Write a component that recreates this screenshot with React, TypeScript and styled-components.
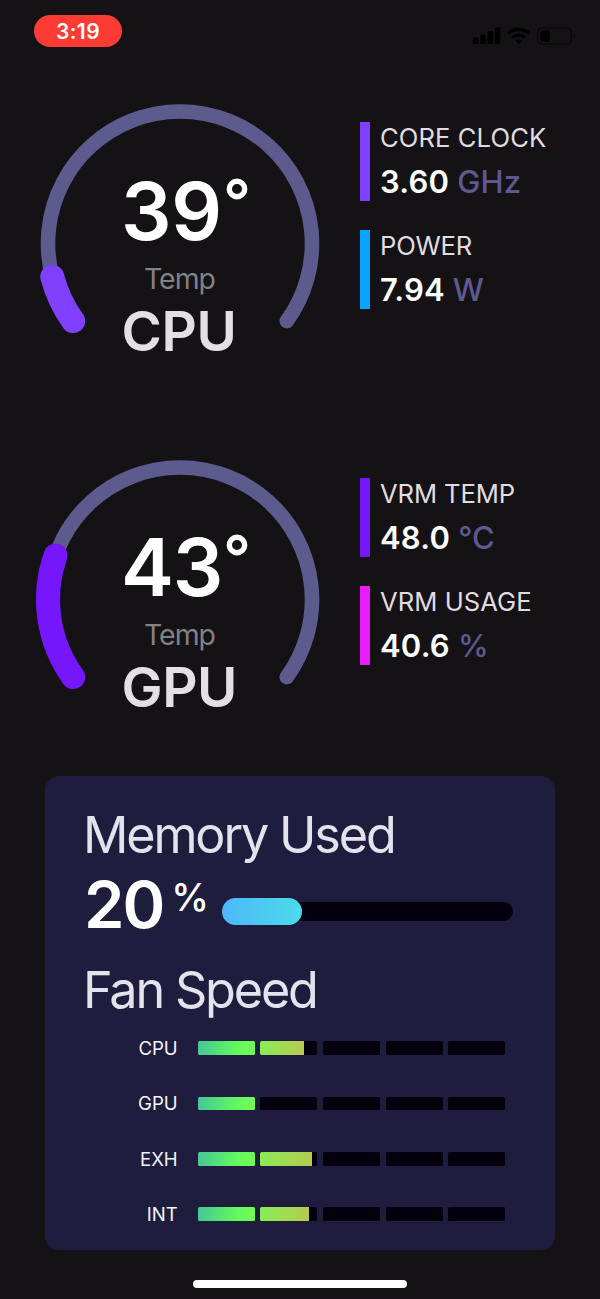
import React from "react";
import styled, { createGlobalStyle } from "styled-components";

const GlobalStyle = createGlobalStyle`
  * { box-sizing: border-box; }
  body {
    margin: 0;
    background: #141215;
    font-family: Inter, "Liberation Sans", sans-serif;
    color: #fff;
  }
`;

const Screen = styled.main`
  width: 600px;
  height: 1299px;
  overflow: hidden;
  display: flex;
  flex-direction: column;
  background: #141215;
`;

const StatusBar = styled.header`
  height: 104px;
  padding: 14.5px 25px 0 34px;
  display: flex;
  justify-content: space-between;
  align-items: flex-start;
`;

const RecordingPill = styled.div`
  width: 88px;
  height: 32px;
  border-radius: 16px;
  background: #fc3b35;
  font-size: 21px;
  font-weight: 600;
  line-height: 33px;
  letter-spacing: 0.4px;
  text-align: center;
`;

const StatusIcons = styled.svg`
  display: block;
  width: 104px;
  height: 24px;
  margin-top: 10.5px;
`;

const Section = styled.section`
  height: 356px;
  display: flex;
  align-items: flex-start;
`;

const GaugeBox = styled.div`
  width: 360px;
  display: grid;
  > * { grid-area: 1 / 1; }
`;

const Dial = styled.svg`
  display: block;
  width: 360px;
  height: 260px;
`;

const Readout = styled.div`
  padding: 67px 0 0 122px;
  display: flex;
  flex-direction: column;
  align-items: flex-start;
  white-space: nowrap;
`;

const Degrees = styled.div<{ $track: number }>`
  font-size: 79.5px;
  font-weight: 600;
  line-height: 80px;
  letter-spacing: ${(p) => p.$track}px;
  display: flex;
`;

const Digits = styled.span`
  width: 105px;
  margin-left: -1px;
`;

const DegreeMark = styled.svg`
  width: 22px;
  height: 22px;
  margin-top: 7px;
`;

const Caption = styled.div`
  margin: 12px 0 0 22px;
  font-size: 28.4px;
  line-height: 32px;
  letter-spacing: -1px;
  color: #828185;
`;

const Device = styled.div`
  margin: 6px 0 0 -0.5px;
  font-size: 54.8px;
  font-weight: 600;
  line-height: 60px;
  letter-spacing: -0.4px;
  color: #e3e0e5;
`;

const Metrics = styled.div`
  padding-top: 18px;
  display: flex;
  flex-direction: column;
  gap: 29px;
`;

const Metric = styled.div<{ $color: string }>`
  height: 79px;
  padding-left: 10px;
  border-left: 10px solid ${(p) => p.$color};
  white-space: nowrap;
`;

const MetricName = styled.div<{ $track: number }>`
  font-size: 25.6px;
  line-height: 32px;
  letter-spacing: ${(p) => p.$track}px;
  color: #e0dde2;
`;

const MetricValue = styled.div`
  margin-top: 10px;
  font-size: 31px;
  font-weight: 600;
  line-height: 36px;
  letter-spacing: 0.2px;
`;

const Unit = styled.span`
  font-weight: 500;
  color: #5d5a8e;
`;

const Card = styled.section`
  flex: none;
  margin: -40.3px 45px 0;
  height: 474px;
  border-radius: 14px;
  padding: 28px 41px 0 39px;
  background: #1f1d3d;
`;

const Heading = styled.h2`
  margin: 0 0 0 -1px;
  font-size: 50.3px;
  font-weight: 400;
  line-height: 62px;
  letter-spacing: -2.15px;
  color: #e4e2ec;
  white-space: nowrap;
`;

const MemoryRow = styled.div`
  height: 93px;
  display: flex;
  align-items: flex-start;
`;

const MemoryNumber = styled.div`
  width: 87.3px;
  font-size: 65px;
  font-weight: 600;
  line-height: 78px;
  letter-spacing: -2px;
`;

const Percent = styled.div`
  width: 50.4px;
  font-size: 38px;
  font-weight: 500;
  line-height: 62px;
`;

const MemoryTrack = styled.div`
  width: 291.7px;
  height: 19.5px;
  margin-top: 36px;
  border-radius: 10px;
  background: #05000e;
  display: flex;
  align-items: center;
`;

const MemoryFill = styled.div`
  width: 80.5px;
  flex: none;
  height: 27px;
  border-radius: 13.5px;
  background: linear-gradient(90deg, #4eb8f8, #4bdbec);
`;

const FanList = styled.div`
  padding-top: 13.3px;
`;

const FanRow = styled.div`
  height: 55.4px;
  display: flex;
  align-items: flex-start;
`;

const FanLabel = styled.div`
  width: 93.7px;
  margin-right: 20px;
  text-align: right;
  font-size: 18.6px;
  line-height: 28px;
  color: #f4f3f8;
`;

const Segments = styled.div`
  padding-top: 7.3px;
  display: flex;
  gap: 5.7px;
`;

const Segment = styled.div`
  width: 57px;
  height: 13.8px;
  border-radius: 1.5px;
  background: #05000e;
  overflow: hidden;
`;

const SegmentFill = styled.div<{ $shades: string }>`
  height: 100%;
  background: linear-gradient(100deg, ${(p) => p.$shades});
`;

const HomeIndicator = styled.div`
  flex: none;
  width: 214px;
  height: 7.5px;
  margin: 30.3px auto 0;
  border-radius: 4px;
  background: #fff;
`;

const CX = 180;
const CY = 139.5;
const R = 132;

function arc(fromDeg: number, toDeg: number) {
  const at = (d: number) => {
    const a = (d * Math.PI) / 180;
    return `${(CX + R * Math.cos(a)).toFixed(2)} ${(CY + R * Math.sin(a)).toFixed(2)}`;
  };
  return `M${at(fromDeg)}A${R} ${R} 0 ${toDeg - fromDeg > 180 ? 1 : 0} 1 ${at(toDeg)}`;
}

function Gauge(props: { value: number; device: string; color: string; end: number; track: number }) {
  return (
    <GaugeBox>
      <Dial viewBox="0 0 360 260" fill="none" strokeLinecap="round">
        <path d={arc(144, 396)} stroke="#5d5a8e" strokeWidth="14.6" />
        <path d={arc(144, props.end)} stroke={props.color} strokeWidth="24" />
      </Dial>
      <Readout>
        <Degrees $track={props.track}>
          <Digits>{props.value}</Digits>
          <DegreeMark viewBox="0 0 22 22">
            <circle cx="11" cy="11" r="7.7" fill="none" stroke="#fff" strokeWidth="5.4" />
          </DegreeMark>
        </Degrees>
        <Caption>Temp</Caption>
        <Device>{props.device}</Device>
      </Readout>
    </GaugeBox>
  );
}

function Stat(props: { name: string; value: string; unit: string; color: string; track: number }) {
  return (
    <Metric $color={props.color}>
      <MetricName $track={props.track}>{props.name}</MetricName>
      <MetricValue>
        {props.value} <Unit>{props.unit}</Unit>
      </MetricValue>
    </Metric>
  );
}

const fans = [
  { name: "CPU", fill: [100, 76] },
  { name: "GPU", fill: [100, 0] },
  { name: "EXH", fill: [100, 90] },
  { name: "INT", fill: [100, 86] },
];

const shades = ["#46c498, #62fa5c 68%, #74fa55", "#86ee56, #b8c950"];

export default function App() {
  return (
    <Screen>
      <GlobalStyle />
      <StatusBar>
        <RecordingPill>3:19</RecordingPill>
        <StatusIcons viewBox="0 0 104 24">
          <rect x="2" y="12.5" width="5.5" height="6.5" rx="1.2" />
          <rect x="9.3" y="9.5" width="5.5" height="9.5" rx="1.2" />
          <rect x="16.6" y="6" width="5.5" height="13" rx="1.2" />
          <rect x="23.8" y="2.5" width="5.5" height="16.5" rx="1.2" />
          <g fill="none" stroke="#000" strokeWidth="3.4">
            <path d="M37.3 8.4a15.2 15.2 0 0 1 20.8 0" />
            <path d="M41.3 12.9a9.2 9.2 0 0 1 12.8 0" />
          </g>
          <path d="M47.7 19.2l-3.3-3.4a4.9 4.9 0 0 1 6.6 0z" />
          <rect x="66.8" y="3" width="33.5" height="16" rx="4.5" fill="none" stroke="#0b090c" strokeWidth="1.7" />
          <rect x="69.5" y="5.3" width="9.3" height="11.7" rx="2.2" />
          <path d="M102.2 8.4a3 3 0 0 1 0 5.4z" fill="#0b090c" />
        </StatusIcons>
      </StatusBar>
      <Section>
        <Gauge value={39} device="CPU" color="#7f40ff" end={165.4} track={-0.4} />
        <Metrics>
          <Stat name="CORE CLOCK" value="3.60" unit="GHz" color="#7f40ff" track={0.1} />
          <Stat name="POWER" value="7.94" unit="W" color="#08a4ff" track={-0.2} />
        </Metrics>
      </Section>
      <Section>
        <Gauge value={43} device="GPU" color="#7616fb" end={199.4} track={-1.2} />
        <Metrics>
          <Stat name="VRM TEMP" value="48.0" unit="°C" color="#7616fb" track={-0.1} />
          <Stat name="VRM USAGE" value="40.6" unit="%" color="#e91df9" track={0.05} />
        </Metrics>
      </Section>
      <Card>
        <Heading>Memory Used</Heading>
        <MemoryRow>
          <MemoryNumber>20</MemoryNumber>
          <Percent>%</Percent>
          <MemoryTrack>
            <MemoryFill />
          </MemoryTrack>
        </MemoryRow>
        <Heading>Fan Speed</Heading>
        <FanList>
          {fans.map((fan) => (
            <FanRow key={fan.name}>
              <FanLabel>{fan.name}</FanLabel>
              <Segments>
                {[0, 1, 2, 3, 4].map((i) => (
                  <Segment key={i}>
                    {fan.fill[i] > 0 && (
                      <SegmentFill $shades={shades[i]} style={{ width: `${fan.fill[i]}%` }} />
                    )}
                  </Segment>
                ))}
              </Segments>
            </FanRow>
          ))}
        </FanList>
      </Card>
      <HomeIndicator />
    </Screen>
  );
}
